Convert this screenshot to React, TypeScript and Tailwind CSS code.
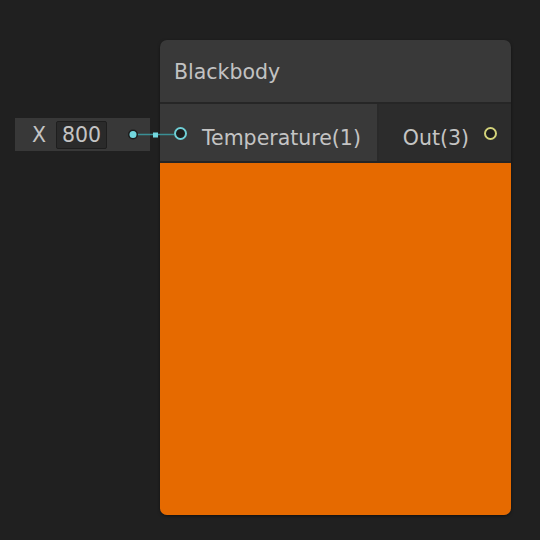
export default function App() {
  return (
    <div
      className="relative flex h-[540px] w-[540px] bg-[#202020] pt-[40px] text-[20.5px] text-[#c4c4c4]"
      style={{ fontFamily: '"DejaVu Sans", Verdana, sans-serif' }}
    >
      {/* inline value field */}
      <div className="w-[160px] pl-[15px] pt-[78px]">
        <div className="flex h-[33px] w-[135px] items-center bg-[#383838]">
          <span className="ml-[17px] w-[24px] pt-[2px] leading-none">X</span>
          <div className="flex h-[28px] w-[51px] items-center justify-center rounded-[2px] border border-[#1e1e1e] bg-[#2a2a2a] pt-[2px] leading-none">
            800
          </div>
        </div>
      </div>

      {/* node */}
      <div className="flex h-[475px] w-[351px] flex-col overflow-hidden rounded-[7px] bg-[#393939] shadow-[0_1px_3px_rgba(0,0,0,0.5)]">
        <div className="flex h-[64px] items-center border-b-2 border-[#262626] px-[14px] pt-[2px] text-[#c2c2c2]">
          Blackbody
        </div>
        <div className="flex h-[59px] border-b-2 border-[#252525]">
          <div className="flex w-[219px] items-center border-r-2 border-[#2a2a2a] bg-[#393939]">
            <span className="ml-[14px] mt-[2px] h-[13px] w-[13px] rounded-full border-2 border-[#6fcfd6] bg-[#1e1e1e]" />
            <span className="ml-[15px] pt-[11px] leading-none">Temperature(1)</span>
          </div>
          <div className="flex flex-1 items-center justify-end bg-[#2c2c2c]">
            <span className="pt-[11px] leading-none">Out(3)</span>
            <span className="ml-[15px] mr-[14px] mt-[2px] h-[13px] w-[13px] rounded-full border-2 border-[#d2d27a] bg-[#1e1e1e]" />
          </div>
        </div>
        <div className="flex-1 bg-[#e66a00]" />
      </div>

      {/* wire from field to port */}
      <svg className="absolute left-0 top-0" width="540" height="540">
        <line x1="133" y1="134.5" x2="174" y2="134.5" stroke="#3a8f95" strokeWidth="1.5" />
        <rect x="153" y="132.5" width="5" height="5" fill="#72d7de" />
        <circle cx="133" cy="134.5" r="5" fill="#1c1c1c" />
        <circle cx="133" cy="134.5" r="3.5" fill="#72d7de" />
      </svg>
    </div>
  )
}
